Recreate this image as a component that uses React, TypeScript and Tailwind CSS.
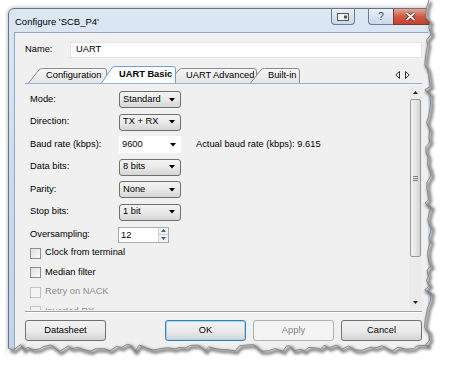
import React from "react"

const FONT = "font-['Liberation_Sans',Arial,sans-serif]"

// jagged "torn paper" line along the right and bottom of the window
function tornPoints() {
    let s = 11
    const rnd = () => {
        s = (s * 9301 + 49297) % 233280
        return s / 233280
    }
    const pts: [number, number][] = []
    let y = 0
    while (y < 346) {
        pts.push([428 + (rnd() - 0.5) * 7, y])
        y += 3 + rnd() * 5
    }
    let x = 429
    while (x > 8) {
        pts.push([x, 348 + (rnd() - 0.5) * 7])
        x -= 3 + rnd() * 6
    }
    pts.push([8, 348])
    return pts
}

function TornEdge() {
    const pts = tornPoints()
    const line = pts.map((p, i) => `${i ? "L" : "M"}${p[0].toFixed(1)},${p[1].toFixed(1)}`).join(" ")
    const fill = `M449,0 ${pts.map((p) => `L${p[0].toFixed(1)},${p[1].toFixed(1)}`).join(" ")} L0,368 L449,368 Z`
    return (
        <svg className="pointer-events-none absolute inset-0" width="449" height="368" viewBox="0 0 449 368">
            <defs>
                <filter id="blur" x="-10%" y="-10%" width="120%" height="120%">
                    <feGaussianBlur stdDeviation="1.6" />
                </filter>
            </defs>
            <path d={fill} fill="#ffffff" />
            <path d={line} transform="translate(2,2)" fill="none" stroke="#4a4a4a" strokeWidth="2.8" opacity="0.8" filter="url(#blur)" />
            <path d={line} fill="none" stroke="#808080" strokeWidth="0.9" />
        </svg>
    )
}

function Combo({ value, editable }: { value: string; editable?: boolean }) {
    return (
        <div
            className={`flex h-[17px] w-[62px] items-center justify-between pl-[3px] pr-[5px] ${
                editable
                    ? "bg-white"
                    : "rounded-[3px] border border-[#707070] bg-gradient-to-b from-[#f3f3f3] via-[#e9e9e9] to-[#d5d5d5]"
            }`}
        >
            <span>{value}</span>
            <svg width="6" height="4" viewBox="0 0 6 4">
                <path d="M0,0 L6,0 L3,3.5 Z" fill="#000" />
            </svg>
        </div>
    )
}

function Row({ label, children }: { label: string; children: React.ReactNode }) {
    return (
        <div className="flex h-[17px] items-center">
            <span className="w-[89px]">{label}</span>
            {children}
        </div>
    )
}

function Check({ label, disabled }: { label: string; disabled?: boolean }) {
    return (
        <div className="flex h-[14px] items-center gap-[4px]">
            <div
                className={`h-[11px] w-[11px] border bg-gradient-to-br ${
                    disabled ? "border-[#c4c4c4] from-[#f4f4f4] to-[#f4f4f4]" : "border-[#8e8f8f] from-[#e0e0e0] to-[#fafafa]"
                }`}
            />
            <span className={disabled ? "text-[#8d8d8d]" : ""}>{label}</span>
        </div>
    )
}

const TABS = [
    { label: "Configuration", w: 79, ml: 3 },
    { label: "UART Basic", w: 75, ml: -6, active: true },
    { label: "UART Advanced", w: 89, ml: -8 },
    { label: "Built-in", w: 50, ml: -7 },
]

function Tab({ label, w, ml, active }: { label: string; w: number; ml: number; active?: boolean }) {
    const h = active ? 17 : 15
    const s = 11
    const d = `M0.5,${h} L${s},1.8 Q${s + 1.2},0.5 ${s + 3.5},0.5 L${w - 3},0.5 Q${w - 0.5},0.5 ${w - 0.5},3 L${w - 0.5},${h}`
    return (
        <div className={`relative flex items-center pl-[18px] ${active ? "z-10 font-bold" : ""}`} style={{ width: w, height: h, marginLeft: ml }}>
            <svg className="absolute inset-0" width={w} height={h}>
                <defs>
                    <linearGradient id={`g${w}`} x1="0" y1="0" x2="0" y2="1">
                        <stop offset="0" stopColor={active ? "#ffffff" : "#f7f7f7"} />
                        <stop offset="1" stopColor={active ? "#ffffff" : "#e4e4e4"} />
                    </linearGradient>
                </defs>
                <path d={d + " Z"} fill={`url(#g${w})`} />
                <path d={d} fill="none" stroke={active ? "#6e9fd8" : "#8c8c8c"} strokeWidth="1" />
            </svg>
            <span className="relative mt-[1px]">{label}</span>
        </div>
    )
}

function Btn({ label, kind }: { label: string; kind?: "default" | "disabled" }) {
    const cls =
        kind === "default"
            ? "border-[#3c7fb1] bg-gradient-to-b from-[#f2f2f2] via-[#ebebeb] to-[#d4d4d4] shadow-[inset_0_0_0_1px_#9fd8f7]"
            : kind === "disabled"
            ? "border-[#adb2b5] bg-[#f4f4f4] text-[#838383]"
            : "border-[#707070] bg-gradient-to-b from-[#f2f2f2] via-[#ebebeb] to-[#d4d4d4]"
    return <div className={`flex h-[21px] w-[81px] items-center justify-center rounded-[3px] border ${cls}`}>{label}</div>
}

export default function App() {
    return (
        <div className={`relative h-[368px] w-[449px] overflow-hidden bg-white pl-[8px] pt-[8px] text-[9.3px] text-black ${FONT}`}>
            <div className="flex h-[352px] w-[426px] flex-col rounded-t-[6px] border border-[#62758b] bg-gradient-to-b from-[#dce7f4] via-[#cbdbee] to-[#c1d3ea] shadow-[0_0_4px_rgba(0,0,0,0.35)]">
                {/* Title bar */}
                <div className="flex h-[23px] items-start">
                    <span className="mt-[6px] ml-[6px] text-[9.5px]">Configure 'SCB_P4'</span>
                    <div className="ml-auto flex items-start">
                        <div className="flex h-[16px] w-[24px] items-center justify-center rounded-b-[4px] border border-t-0 border-[#6b7d93] bg-gradient-to-b from-[#e9f0f8] to-[#c9d8ea]">
                            <svg width="12" height="8" viewBox="0 0 12 8">
                                <rect x="0.5" y="0.5" width="11" height="7" fill="#f4f4f4" stroke="#555" />
                                <rect x="7" y="2.5" width="3" height="3" fill="#555" />
                            </svg>
                        </div>
                        <div className="ml-[13px] flex h-[16px] w-[25px] items-center justify-center rounded-bl-[4px] border border-t-0 border-r-0 border-[#6b7d93] bg-gradient-to-b from-[#e9f0f8] to-[#c9d8ea] text-[10px] text-[#3d4652]">
                            ?
                        </div>
                        <div className="flex h-[16px] w-[40px] items-center justify-center border border-t-0 border-r-0 border-[#7a3a34] bg-gradient-to-b from-[#e6a394] via-[#cf5a45] to-[#c6412d] pr-[6px]">
                            <svg width="11" height="9" viewBox="0 0 11 9">
                                <path d="M1.5,1 L9.5,8 M9.5,1 L1.5,8" stroke="#4a1e18" strokeWidth="3.2" />
                                <path d="M1.5,1 L9.5,8 M9.5,1 L1.5,8" stroke="#fff" strokeWidth="1.8" />
                            </svg>
                        </div>
                    </div>
                </div>

                {/* Client area */}
                <div className="mx-[5px] flex flex-1 flex-col border-l border-t border-[#93a7bf] bg-[#f0f0f0] pl-[10px] pr-[6px] pt-[9px]">
                    <div className="flex h-[16px] items-center">
                        <span className="w-[45px]">Name:</span>
                        <div className="flex h-[16px] flex-1 items-center border border-[#e3e3e3] bg-white pl-[5px]">UART</div>
                    </div>

                    {/* Tabs */}
                    <div className="mt-[9px] flex h-[17px] items-end border-b border-[#8db2e3]">
                        {TABS.map((t) => (
                            <Tab key={t.label} {...t} />
                        ))}
                        <div className="ml-auto mb-[4px] mr-[12px] flex gap-[5px]">
                            <svg width="5" height="8" viewBox="0 0 5 8">
                                <path d="M4.5,0.5 L4.5,7.5 L0.8,4 Z" fill="none" stroke="#333" />
                            </svg>
                            <svg width="5" height="8" viewBox="0 0 5 8">
                                <path d="M0.5,0.5 L0.5,7.5 L4.2,4 Z" fill="none" stroke="#333" />
                            </svg>
                        </div>
                    </div>

                    {/* Panel */}
                    <div className="flex h-[226px]">
                        <div className="flex flex-1 flex-col overflow-hidden pl-[5px] pt-[7px]">
                            <div className="flex flex-col gap-[5.5px]">
                                <Row label="Mode:">
                                    <Combo value="Standard" />
                                </Row>
                                <Row label="Direction:">
                                    <Combo value="TX + RX" />
                                </Row>
                                <Row label="Baud rate (kbps):">
                                    <Combo value="9600" editable />
                                    <span className="ml-[15px]">Actual baud rate (kbps): 9.615</span>
                                </Row>
                                <Row label="Data bits:">
                                    <Combo value="8 bits" />
                                </Row>
                                <Row label="Parity:">
                                    <Combo value="None" />
                                </Row>
                                <Row label="Stop bits:">
                                    <Combo value="1 bit" />
                                </Row>
                                <div className="flex h-[17px] items-center">
                                    <span className="w-[88px]">Oversampling:</span>
                                    <div className="flex h-[16px] w-[51px] border border-[#abadb3] bg-white">
                                        <span className="flex-1 pl-[2px] leading-[14px]">12</span>
                                        <div className="flex w-[10px] flex-col border-l border-[#d0d0d0]">
                                            <div className="flex flex-1 items-center justify-center border-b border-[#d0d0d0] bg-[#eef2f6]">
                                                <svg width="5" height="3" viewBox="0 0 5 3">
                                                    <path d="M0,3 L5,3 L2.5,0 Z" fill="#4c607a" />
                                                </svg>
                                            </div>
                                            <div className="flex flex-1 items-center justify-center bg-[#eef2f6]">
                                                <svg width="5" height="3" viewBox="0 0 5 3">
                                                    <path d="M0,0 L5,0 L2.5,3 Z" fill="#4c607a" />
                                                </svg>
                                            </div>
                                        </div>
                                    </div>
                                </div>
                            </div>
                            <div className="mt-[3px] flex flex-col gap-[5.5px]">
                                <Check label="Clock from terminal" />
                                <Check label="Median filter" />
                                <Check label="Retry on NACK" disabled />
                                <Check label="Inverted RX" disabled />
                            </div>
                        </div>

                        {/* Scrollbar */}
                        <div className="mb-[1px] mt-[2px] flex w-[13px] flex-col bg-[#ebebeb]">
                            <div className="flex h-[13px] items-center justify-center">
                                <svg width="5" height="3" viewBox="0 0 5 3">
                                    <path d="M0,3 L5,3 L2.5,0 Z" fill="#222" />
                                </svg>
                            </div>
                            <div className="mx-[1px] flex h-[158px] items-center justify-center rounded-[2px] border border-[#979797] bg-gradient-to-r from-[#f2f2f2] via-[#e6e6e6] to-[#d2d2d2]">
                                <svg width="5" height="5" viewBox="0 0 5 5">
                                    <path d="M0,0.5 H5 M0,2.5 H5 M0,4.5 H5" stroke="#6a6a6a" strokeWidth="0.8" />
                                </svg>
                            </div>
                            <div className="flex-1" />
                            <div className="flex h-[13px] items-center justify-center">
                                <svg width="5" height="3" viewBox="0 0 5 3">
                                    <path d="M0,0 L5,0 L2.5,3 Z" fill="#222" />
                                </svg>
                            </div>
                        </div>
                    </div>

                    <div className="mt-[1px] border-t border-[#a0a0a0] border-b border-b-white" />

                    {/* Buttons */}
                    <div className="mt-[7px] flex justify-between">
                        <Btn label="Datasheet" />
                        <div className="flex gap-[7px]">
                            <Btn label="OK" kind="default" />
                            <Btn label="Apply" kind="disabled" />
                            <Btn label="Cancel" />
                        </div>
                    </div>
                </div>
            </div>
            <TornEdge />
        </div>
    )
}
